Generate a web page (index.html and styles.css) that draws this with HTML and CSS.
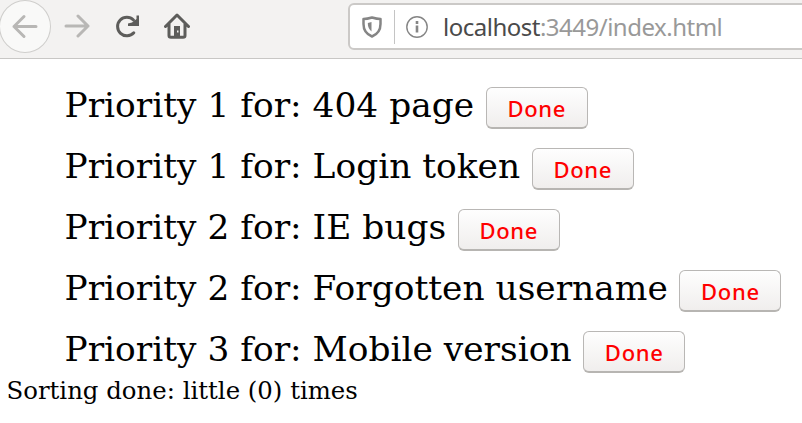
FILE: index.html
```html
<!DOCTYPE html>
<html lang="en">
<head>
<meta charset="utf-8">
<title>Priorities</title>
<link rel="stylesheet" href="styles.css">
</head>
<body>
<header class="toolbar">
  <span class="nav back"><svg width="50" height="50" viewBox="0 0 50 50"><path d="M36 25.500H14M24 15.500L14 25.500L24 35.500"/></svg></span>
  <svg class="nav forward" width="26" height="24" viewBox="0 0 26 24"><path d="M2 12H24M14 2L24 12L14 22"/></svg>
  <svg class="nav reload" width="25" height="24" viewBox="0 0 25 24"><path d="M18.800 18.800A9.300 9.300 0 1 1 18.500 6"/><path class="solid" d="M21.500 1.500H24V12H13V9.500L17 8.500L21.500 5Z"/></svg>
  <svg class="nav home" width="26" height="26" viewBox="0 0 26 26"><path d="M1.500 13.500L13 2L24.500 13.500M5 11V22.500Q5 24.300 7 24.300H19Q21 24.300 21 22.500V11"/><path class="solid" fill-rule="evenodd" d="M10 13H16V24H10ZM13 17.500V19.500H14.500V17.500Z"/></svg>
  <div class="address">
    <svg class="shield" width="20" height="22" viewBox="0 0 20 22"><path d="M10 1.500Q5 3 1.500 3V8Q1.500 17 10 20.500Q18.500 17 18.500 8V3Q15 3 10 1.500Z"/><path class="solid" d="M9.500 6V15.500Q5.800 12.500 5.800 7Z"/></svg>
    <span class="divider"></span>
    <svg class="info" width="22" height="22" viewBox="0 0 22 22"><circle cx="11" cy="11" r="10.200"/><path d="M11 9.500V16.500M11 5V8"/></svg>
    <span class="url"><span class="host">localhost</span>:3449/index.html</span>
  </div>
</header>
<main>
  <ul class="tasks">
    <li><span>Priority 1 for: 404 page</span><button>Done</button></li>
    <li><span>Priority 1 for: Login token</span><button>Done</button></li>
    <li><span>Priority 2 for: IE bugs</span><button>Done</button></li>
    <li><span>Priority 2 for: Forgotten username</span><button>Done</button></li>
    <li><span>Priority 3 for: Mobile version</span><button>Done</button></li>
  </ul>
  <p class="status">Sorting done: little (0) times</p>
</main>
</body>
</html>
```
FILE: styles.css
```css
* { box-sizing: border-box; }
body { margin: 0; width: 802px; height: 423px; overflow: hidden; background: #fff; color: #000; font-family: "DejaVu Serif", serif; }
.toolbar { display: flex; align-items: flex-start; height: 59px; background: #f3f2f1; border-bottom: 1px solid #c8c7c5; }
svg { display: block; flex: none; fill: none; stroke: #5d5d5b; stroke-width: 3; stroke-linecap: round; stroke-linejoin: round; }
svg .solid { fill: #5d5d5b; stroke: none; }
.back { width: 52px; height: 53px; border: 1px solid #cfcecc; border-radius: 50%; background: #f9f9f8; margin-left: -1px; }
.back svg, .forward { stroke: #b8b7b5; }
.forward { margin: 14px 0 0 13px; }
.reload { margin: 14px 0 0 25px; }
.home { margin: 13px 0 0 24px; }
.address { display: flex; align-items: center; width: 470px; height: 47px; flex: none; margin: 3px 0 0 158px; border: 2px solid #cbc9c7; border-radius: 6px; background: #fff; }
.shield { margin-left: 12px; stroke: #858585; stroke-width: 2.500px; }
.shield .solid { fill: #858585; }
.divider { width: 1px; height: 34px; margin-left: 12px; background: #c4c4c4; }
.info { margin-left: 11px; stroke: #858585; stroke-width: 1.400px; }
.info path { stroke-width: 2.600px; stroke-linecap: butt; }
.url { margin-left: 15px; font: 24px/34px "Noto Sans", sans-serif; letter-spacing: -.5px; color: #999; white-space: nowrap; }
.host { color: #4a4a4a; }
.tasks { list-style: none; margin: 0; padding: 18px 0 0 64.500px; }
.tasks li { display: flex; align-items: flex-start; height: 61px; font-size: 34.400px; line-height: 56px; white-space: nowrap; }
.tasks button { width: 102px; height: 42px; margin: 10px 0 0 11.700px; padding: 0; border: 1px solid #b9b7b5; border-bottom: 2px solid #b7b5b2; border-radius: 6px; background: linear-gradient(#fefefe, #f0eeed); color: #f00; font: 500 22px/38px "Noto Sans", sans-serif; letter-spacing: .7px; }
.status { margin: -7px 0 0 6.500px; font-size: 24.400px; line-height: 32px; }
```
